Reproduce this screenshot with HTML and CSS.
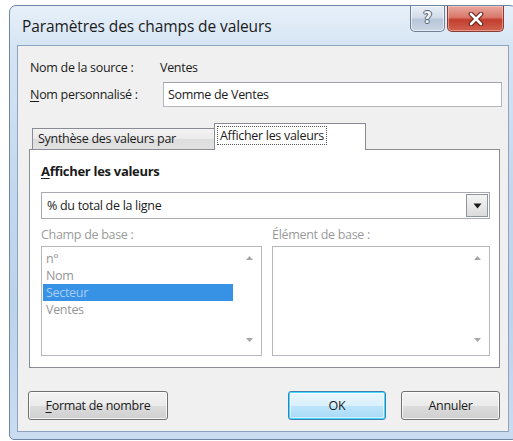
FILE: index.html
```html
<!DOCTYPE html>
<html lang="fr">
<head>
<meta charset="utf-8">
<title>Paramètres des champs de valeurs</title>
<link rel="stylesheet" href="styles.css">
</head>
<body>
<div class="window">
  <div class="titlebar">
    <span class="title">Paramètres des champs de valeurs</span>
    <div class="caption-btns">
      <div class="cbtn help"><span class="help-glyph">?</span></div>
      <div class="cbtn close">
        <svg width="16" height="14" viewBox="0 0 16 14">
          <path d="M3 2 L13 12 M13 2 L3 12" stroke="#6b1c14" stroke-width="4.6" stroke-linecap="round"/>
          <path d="M3 2 L13 12 M13 2 L3 12" stroke="#ffffff" stroke-width="2.6" stroke-linecap="round"/>
        </svg>
      </div>
    </div>
  </div>

  <div class="client">
    <div class="row row-source">
      <span class="label">Nom de la source :</span>
      <span class="value">Ventes</span>
    </div>
    <div class="row row-name">
      <span class="label label-name"><u>N</u>om personnalisé :</span>
      <div class="textbox">Somme de Ventes</div>
    </div>

    <div class="tabs">
      <div class="tabstrip">
        <div class="tab">Synthèse des valeurs par</div>
        <div class="tab active"><span class="focus">Afficher les valeurs</span></div>
      </div>
      <div class="panel">
        <div class="heading"><u>A</u>fficher les valeurs</div>
        <div class="combo">
          <span class="combo-text">% du total de la ligne</span>
          <span class="combo-btn">
            <svg width="9" height="6" viewBox="0 0 9 6"><path d="M0.5 0.5 H8.5 L4.5 5.5 Z" fill="#1a1a1a"/></svg>
          </span>
        </div>
        <div class="lists">
          <div class="col">
            <div class="cap">Champ de base :</div>
            <div class="listbox">
              <div class="items">
                <div class="item">n°</div>
                <div class="item">Nom</div>
                <div class="item selected">Secteur</div>
                <div class="item">Ventes</div>
              </div>
              <div class="scroll">
                <svg width="7" height="4" viewBox="0 0 7 4"><path d="M0 4 L3.5 0 L7 4 Z" fill="#a6a6a6"/></svg>
                <svg width="7" height="4" viewBox="0 0 7 4"><path d="M0 0 L7 0 L3.5 4 Z" fill="#a6a6a6"/></svg>
              </div>
            </div>
          </div>
          <div class="col">
            <div class="cap">Élément de base :</div>
            <div class="listbox">
              <div class="items"></div>
              <div class="scroll">
                <svg width="7" height="4" viewBox="0 0 7 4"><path d="M0 4 L3.5 0 L7 4 Z" fill="#a6a6a6"/></svg>
                <svg width="7" height="4" viewBox="0 0 7 4"><path d="M0 0 L7 0 L3.5 4 Z" fill="#a6a6a6"/></svg>
              </div>
            </div>
          </div>
        </div>
      </div>
    </div>

    <div class="buttons">
      <div class="btn btn-format"><u>F</u>ormat de nombre</div>
      <div class="btn btn-ok">OK</div>
      <div class="btn btn-cancel">Annuler</div>
    </div>
  </div>
</div>
</body>
</html>
```

FILE: styles.css
```css
html, body {
  margin: 0;
  padding: 0;
  overflow: hidden;
  background: #ffffff;
}

body {
  width: 513px;
  height: 441px;
  font-family: "Open Sans", "Noto Sans", sans-serif;
  font-size: 12.5px;
  letter-spacing: -0.3px;
  color: #1b1b1b;
}

u {
  text-decoration: underline;
  text-underline-offset: 2px;
}

/* Aero-style window frame */
.window {
  margin: 5px 0 0 9px;
  width: 508px;
  height: 435px;
  box-sizing: border-box;
  border: 1px solid #71869f;
  border-radius: 7px 7px 5px 5px;
  background: linear-gradient(to bottom, #e7f0f9 0, #d6e5f4 40px, #c3d8ee 180px, #bcd3ec 300px, #cadcf0 435px);
  padding: 0 7px 7px 7px;
  display: flex;
  flex-direction: column;
}

.titlebar {
  height: 39px;
  flex: none;
  display: flex;
  align-items: flex-start;
}

.title {
  margin: 10px 0 0 5px;
  line-height: 20px;
  font-size: 15.5px;
  letter-spacing: -0.1px;
  color: #1b1b1b;
}

.caption-btns {
  margin-left: auto;
  margin-right: 5px;
  display: flex;
  gap: 2px;
}

.cbtn {
  height: 26px;
  box-sizing: border-box;
  border: 1px solid #6d7f96;
  border-top: none;
  border-radius: 0 0 5px 5px;
  display: flex;
  align-items: center;
  justify-content: center;
}

.help {
  width: 35px;
  background: linear-gradient(to bottom, #e8eef5 0, #d3dde9 45%, #b7c6d8 55%, #c9d6e5 100%);
  box-shadow: inset 0 0 0 1px rgba(255, 255, 255, 0.6);
}

.help-glyph {
  font-family: "DejaVu Sans", sans-serif;
  font-weight: bold;
  font-size: 15px;
  line-height: 1;
  color: #f4f6f9;
  text-shadow: 1px 0 0 #4f5d70, -1px 0 0 #4f5d70, 0 1px 0 #4f5d70, 0 -1px 0 #4f5d70;
}

.close {
  width: 57px;
  border-color: #8a3b32;
  background: linear-gradient(to bottom, #e8a99f 0, #d9786b 45%, #c23e2d 55%, #d0624f 100%);
  box-shadow: inset 0 0 0 1px rgba(255, 220, 210, 0.45);
}

/* Dialog client area */
.client {
  flex: 1;
  border: 1px solid #8ea4be;
  background: #f0f0f0;
  display: flex;
  flex-direction: column;
}

.row {
  display: flex;
  align-items: center;
  padding-left: 12px;
}

.row-source {
  margin-top: 11px;
  height: 20px;
}

.row-name {
  margin-top: 5px;
  height: 25px;
}

.label {
  width: 130px;
  flex: none;
}

.label-name {
  width: 133px;
}

.textbox {
  width: 339px;
  height: 25px;
  box-sizing: border-box;
  border: 1px solid #b3b6bc;
  border-top-color: #9fa2a8;
  background: #ffffff;
  padding-left: 4px;
  line-height: 23px;
}

/* Tab control */
.tabs {
  margin: 16px 8px 0 11px;
}

.tabstrip {
  height: 26px;
  display: flex;
  align-items: flex-end;
  padding-left: 3px;
}

.tab {
  height: 21px;
  box-sizing: border-box;
  width: 183px;
  border: 1px solid #898c95;
  border-bottom: none;
  background: linear-gradient(to bottom, #f3f3f3 0, #ebebeb 50%, #dddddd 51%, #e2e2e2 100%);
  line-height: 20px;
  padding-left: 5px;
}

.tab.active {
  width: 152px;
  height: 27px;
  margin-left: -1px;
  margin-bottom: -1px;
  background: #ffffff;
  position: relative;
  z-index: 1;
  padding: 3px 0 0 3px;
  line-height: 17px;
}

.focus {
  display: inline-block;
  outline: 1px dotted #555;
  outline-offset: 0;
  padding: 0 2px;
}

.panel {
  height: 219px;
  box-sizing: border-box;
  border: 1px solid #898c95;
  background: #ffffff;
  padding: 12px 8px 11px 11px;
}

.heading {
  font-weight: bold;
  font-size: 13px;
  line-height: 18px;
  color: #1a1a1a;
}

.combo {
  margin-top: 12px;
  width: 449px;
  height: 27px;
  box-sizing: border-box;
  border: 1px solid #a8abb1;
  background: #ffffff;
  display: flex;
  align-items: center;
}

.combo-text {
  flex: 1;
  padding-left: 5px;
}

.combo-btn {
  width: 22px;
  height: 23px;
  margin-right: 1px;
  box-sizing: border-box;
  border: 1px solid #8e959f;
  background: linear-gradient(to bottom, #f4f4f4, #dcdcdc);
  display: flex;
  align-items: center;
  justify-content: center;
}

.lists {
  display: grid;
  grid-template-columns: 221px 218px;
  column-gap: 10px;
}

.cap {
  margin-top: 8px;
  line-height: 16px;
  color: #9b9b9b;
}

.listbox {
  margin-top: 3px;
  height: 110px;
  box-sizing: border-box;
  border: 1px solid #b5b8bd;
  background: #ffffff;
  display: grid;
  grid-template-columns: 1fr 24px;
}

.items {
  padding: 3px 0 0 1px;
}

.item {
  width: 190px;
  height: 17px;
  line-height: 17px;
  padding-left: 3px;
  box-sizing: border-box;
  color: #969696;
}

.item.selected {
  background: #3792e6;
  color: #a9cdf3;
}

.scroll {
  display: flex;
  flex-direction: column;
  align-items: center;
  justify-content: space-between;
  padding: 9px 0 13px;
}

/* Bottom command buttons */
.buttons {
  margin-top: 23px;
  height: 29px;
  padding: 0 8px 0 10px;
  display: flex;
  gap: 15px;
}

.btn {
  height: 29px;
  box-sizing: border-box;
  border: 1px solid #707070;
  border-radius: 3px;
  background: linear-gradient(to bottom, #f2f2f2 0, #ebebeb 50%, #dddddd 51%, #cfcfcf 100%);
  box-shadow: inset 0 0 0 1px rgba(255, 255, 255, 0.75);
  display: flex;
  align-items: center;
  justify-content: center;
}

.btn-format {
  width: 140px;
}

.btn-ok {
  width: 98px;
  margin-left: auto;
  border-color: #3c7fb1;
  background: linear-gradient(to bottom, #eaf6fd 0, #d9f0fc 50%, #bee6fd 51%, #a7d9f5 100%);
  box-shadow: inset 0 0 0 1px #48d8fb, inset 0 0 0 2px rgba(255, 255, 255, 0.5);
}

.btn-cancel {
  width: 99px;
}
```
